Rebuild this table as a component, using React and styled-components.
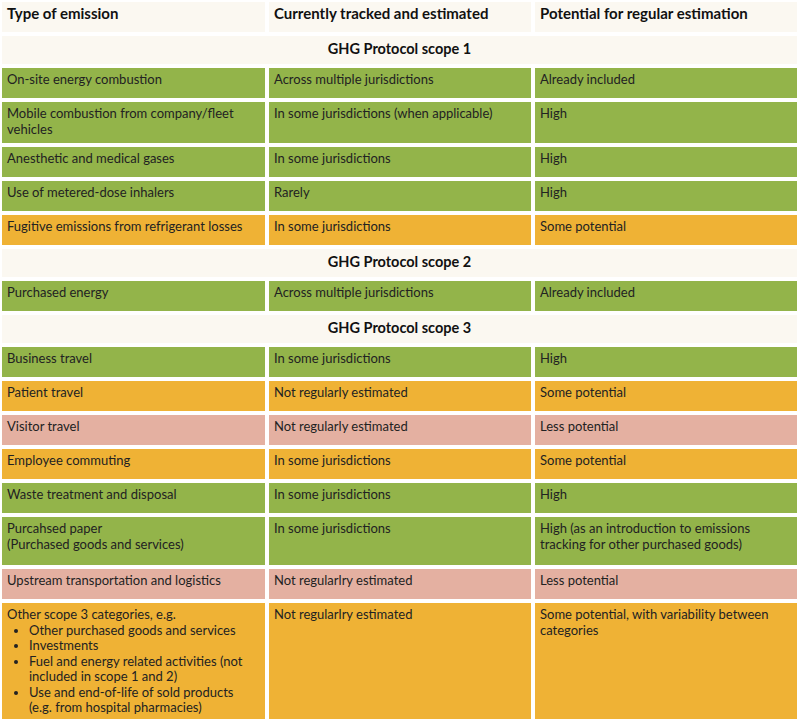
import React from 'react';
import styled, { createGlobalStyle } from 'styled-components';

const GlobalStyle = createGlobalStyle`
  body {
    margin: 0;
    background: #ffffff;
    font-family: Lato, "Noto Sans", sans-serif;
    color: #222;
  }
`;

const colors = {
  green: '#93b44a',
  orange: '#efb235',
  pink: '#e4b0a1',
  light: '#fbf8f1',
};

const rows = [
  { scope: 'GHG Protocol scope 1' },
  { type: 'On-site energy combustion', tracked: 'Across multiple jurisdictions', potential: 'Already included', tone: 'green' },
  { type: 'Mobile combustion from company/fleet vehicles', tracked: 'In some jurisdictions (when applicable)', potential: 'High', tone: 'green' },
  { type: 'Anesthetic and medical gases', tracked: 'In some jurisdictions', potential: 'High', tone: 'green' },
  { type: 'Use of metered-dose inhalers', tracked: 'Rarely', potential: 'High', tone: 'green' },
  { type: 'Fugitive emissions from refrigerant losses', tracked: 'In some jurisdictions', potential: 'Some potential', tone: 'orange' },
  { scope: 'GHG Protocol scope 2' },
  { type: 'Purchased energy', tracked: 'Across multiple jurisdictions', potential: 'Already included', tone: 'green' },
  { scope: 'GHG Protocol scope 3' },
  { type: 'Business travel', tracked: 'In some jurisdictions', potential: 'High', tone: 'green' },
  { type: 'Patient travel', tracked: 'Not regularly estimated', potential: 'Some potential', tone: 'orange' },
  { type: 'Visitor travel', tracked: 'Not regularly estimated', potential: 'Less potential', tone: 'pink' },
  { type: 'Employee commuting', tracked: 'In some jurisdictions', potential: 'Some potential', tone: 'orange' },
  { type: 'Waste treatment and disposal', tracked: 'In some jurisdictions', potential: 'High', tone: 'green' },
  { type: ['Purcahsed paper', '(Purchased goods and services)'], tracked: 'In some jurisdictions', potential: 'High (as an introduction to emissions tracking for other purchased goods)', tone: 'green', tall: true },
  { type: 'Upstream transportation and logistics', tracked: 'Not regularlry estimated', potential: 'Less potential', tone: 'pink' },
];

const otherItems = [
  ['Other purchased goods and services'],
  ['Investments'],
  ['Fuel and energy related activities (not', 'included in scope 1 and 2)'],
  ['Use and end-of-life of sold products', '(e.g. from hospital pharmacies)'],
];

const renderLines = (lines) =>
  Array.isArray(lines)
    ? lines.map((line, i) => (
        <React.Fragment key={i}>
          {i > 0 && <br />}
          {line}
        </React.Fragment>
      ))
    : lines;

const App = () => {
  return (
    <>
      <GlobalStyle />
      <Table>
        <HeadCell>Type of emission</HeadCell>
        <HeadCell>Currently tracked and estimated</HeadCell>
        <HeadCell>Potential for regular estimation</HeadCell>
        {rows.map((row, i) =>
          row.scope ? (
            <ScopeCell key={i}>{row.scope}</ScopeCell>
          ) : (
            <React.Fragment key={i}>
              <Cell $tone={row.tone} $tall={row.tall}>{renderLines(row.type)}</Cell>
              <Cell $tone={row.tone} $tall={row.tall}>{row.tracked}</Cell>
              <Cell $tone={row.tone} $tall={row.tall}>{row.potential}</Cell>
            </React.Fragment>
          )
        )}
        <Cell $tone="orange">
          Other scope 3 categories, e.g.
          <BulletList>
            {otherItems.map((item, i) => (
              <li key={i}>{renderLines(item)}</li>
            ))}
          </BulletList>
        </Cell>
        <Cell $tone="orange">Not regularlry estimated</Cell>
        <Cell $tone="orange">Some potential, with variability between categories</Cell>
      </Table>
    </>
  );
};

const Table = styled.div`
  display: grid;
  grid-template-columns: 263px 262px 262px;
  column-gap: 4px;
  row-gap: 4px;
  padding: 2px;
  width: 795px;
`;

const Cell = styled.div`
  background: ${(p) => colors[p.$tone]};
  padding: 4px 5px 6px;
  min-height: ${(p) => (p.$tall ? '48px' : '30px')};
  box-sizing: border-box;
  font-size: 13px;
  line-height: 15.5px;
  color: #222;
`;

const HeadCell = styled(Cell)`
  background: ${colors.light};
  font-weight: 700;
  font-size: 15px;
  color: #111;
`;

const ScopeCell = styled.div`
  grid-column: 1 / -1;
  background: ${colors.light};
  text-align: center;
  font-weight: 700;
  font-size: 14.5px;
  line-height: 15.5px;
  padding: 5px 5px 7px;
  min-height: 28px;
  box-sizing: border-box;
  color: #111;
`;

const BulletList = styled.ul`
  margin: 0;
  padding-left: 22px;
  list-style: disc;
`;

export default App;
